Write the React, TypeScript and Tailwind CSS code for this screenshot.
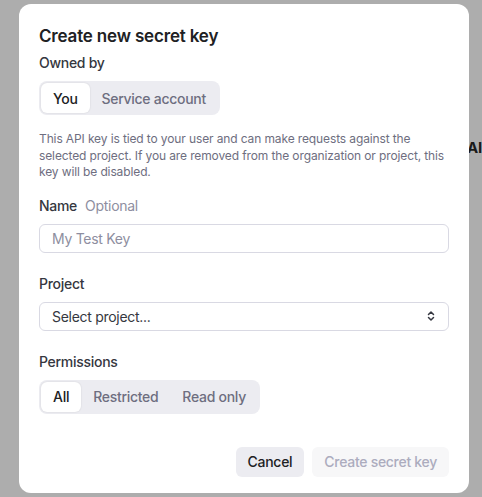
import React from "react";

function Segmented({ items, active }: { items: string[]; active: number }) {
  return (
    <div className="inline-flex rounded-lg bg-[#ececf1] p-0.5">
      {items.map((it, i) => (
        <div
          key={it}
          className={
            i === active
              ? "h-[30px] px-3 flex items-center rounded-md bg-white text-[14px] font-medium text-[#202123] shadow-[0_0_2px_rgba(0,0,0,0.12)]"
              : "h-[30px] px-3 flex items-center rounded-md text-[14px] font-medium text-[#6e6e80]"
          }
        >
          {it}
        </div>
      ))}
    </div>
  );
}

export default function App() {
  return (
    <div
      className="relative w-[482px] h-[497px] bg-[#adadad] overflow-hidden tracking-[-0.018em]"
      style={{ fontFamily: "Inter, 'Noto Sans', sans-serif" }}
    >
      <div className="absolute left-[467px] top-[137px] whitespace-nowrap text-[15px] font-bold text-[#1a1a1a]">
        AI A
      </div>
      <div className="absolute left-[19px] top-[4px] w-[450px] h-[489px] rounded-[12px] bg-white px-5 pt-[20px] flex flex-col">
        <div className="text-[17px] leading-6 font-semibold text-[#202123] tracking-[-0.01em]">Create new secret key</div>
        <div className="mt-[5px] text-[14px] leading-5 font-medium text-[#353740]">Owned by</div>
        <div className="mt-2">
          <Segmented items={["You", "Service account"]} active={0} />
        </div>
        <p className="mt-[16px] text-[12px] leading-[16.5px] text-[#6e6e80] tracking-[-0.01em]">
          This API key is tied to your user and can make requests against the selected project. If you are removed from the organization or project, this key will be disabled.
        </p>
        <div className="mt-[15px] text-[14px] leading-5 flex gap-2">
          <span className="font-medium text-[#353740]">Name</span>
          <span className="text-[#8e8ea0]">Optional</span>
        </div>
        <div className="mt-2 h-[29px] rounded-md border border-[#d9d9e3] flex items-center px-3 text-[14px] text-[#8e8ea0]">
          My Test Key
        </div>
        <div className="mt-[21px] text-[14px] leading-5 font-medium text-[#353740]">Project</div>
        <div className="mt-2 h-[29px] rounded-md border border-[#d9d9e3] flex items-center justify-between pl-3 pr-[11px] text-[14px] text-[#353740]">
          <span>Select project...</span>
          <svg width="12" height="12" viewBox="0 0 12 12" fill="none" stroke="#353740" strokeWidth="1.5" strokeLinecap="round" strokeLinejoin="round">
            <path d="M3.5 4.5 L6 2 L8.5 4.5" />
            <path d="M3.5 7.5 L6 10 L8.5 7.5" />
          </svg>
        </div>
        <div className="mt-[21px] text-[14px] leading-5 font-medium text-[#353740]">Permissions</div>
        <div className="mt-2">
          <Segmented items={["All", "Restricted", "Read only"]} active={0} />
        </div>
        <div className="mt-[33px] flex justify-end gap-2">
          <div className="h-[30px] px-3 flex items-center rounded-md bg-[#ececf1] text-[14px] font-medium text-[#202123]">Cancel</div>
          <div className="h-[30px] px-3 flex items-center rounded-md bg-[#f7f7f8] text-[14px] font-medium text-[#acacbe]">Create secret key</div>
        </div>
      </div>
    </div>
  );
}
